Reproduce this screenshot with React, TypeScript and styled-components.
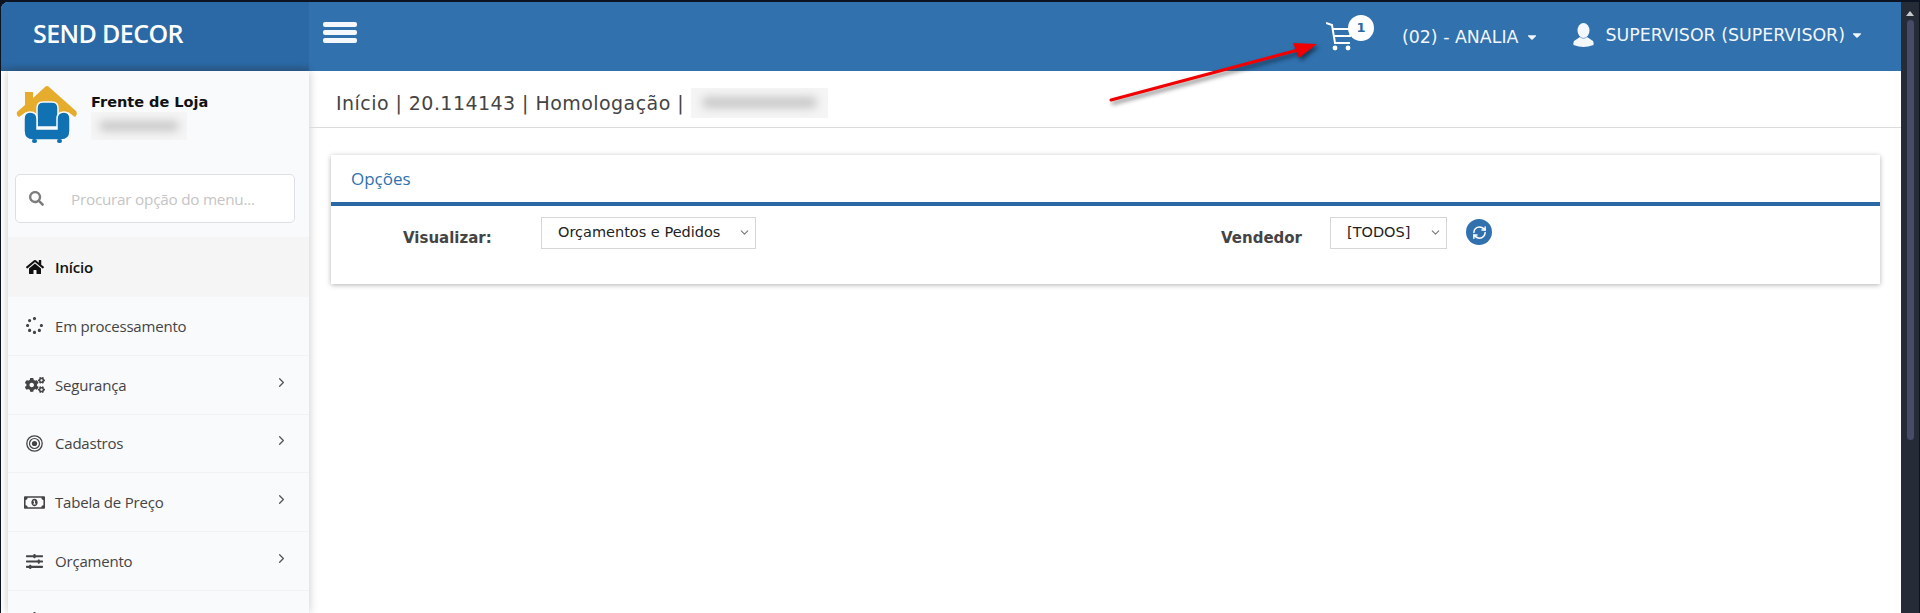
import React from "react";
import styled, { createGlobalStyle } from "styled-components";
import { FaHome, FaSpinner, FaCogs, FaSlidersH, FaSearch, FaRegMoneyBillAlt, FaCaretDown } from "react-icons/fa";
import { LuChevronRight, LuChevronDown, LuRefreshCw } from "react-icons/lu";

const GlobalStyle = createGlobalStyle`
  html, body { margin: 0; padding: 0; height: 100%; overflow: hidden; background: #0c1424; }
  * { box-sizing: border-box; }
`;

const Screen = styled.div`
  position: relative;
  display: flex;
  height: 613px;
  padding: 2px 0 0 1px;
  overflow: hidden;
  font-family: "Open Sans", sans-serif;
`;

const Frame = styled.div`
  flex: 1;
  display: flex;
  flex-direction: column;
  min-width: 0;
  background: #fff;
  border-top-left-radius: 8px;
  overflow: hidden;
`;

const TopBar = styled.header`
  display: flex;
  height: 69px;
  flex: none;
  background: #3071ae;
  color: #fff;
`;

const Brand = styled.div`
  width: 308px;
  flex: none;
  padding: 13px 0 0 32px;
  background: linear-gradient(#2a69a5 88%, #2c5f92);
  font-size: 25px;
  font-weight: 600;
  line-height: 36px;
  letter-spacing: -0.6px;
`;

const Nav = styled.nav`
  flex: 1;
  display: flex;
  align-items: flex-start;
  padding: 20px 37px 0 14px;
`;

const Burger = styled.div`
  display: flex;
  flex-direction: column;
  gap: 3px;
  width: 34px;
  span {
    height: 5px;
    border-radius: 2px;
    background: #f4f7fb;
  }
`;

const Cart = styled.div`
  position: relative;
  margin: -2px 49px 0 auto;
  width: 27px;
`;

const Badge = styled.span`
  position: absolute;
  left: 22px;
  top: -5px;
  width: 26px;
  height: 26px;
  border-radius: 50%;
  background: #fff;
  color: #2a69a5;
  font: 700 13px/26px "DejaVu Sans", sans-serif;
  text-align: center;
`;

const Menu = styled.div<{ $gap?: number; $up?: number }>`
  display: flex;
  align-items: center;
  height: 30px;
  margin-top: ${(p) => -(p.$up ?? 0)}px;
  margin-right: ${(p) => p.$gap ?? 0}px;
  font-family: "DejaVu Sans", sans-serif;
  font-size: 17.4px;
  color: #f2f6fa;
  white-space: nowrap;
  svg { flex: none; }
`;

const Caret = styled(FaCaretDown)<{ $ml: number }>`
  margin-left: ${(p) => p.$ml}px;
`;

const UserGlyph = styled.svg`
  margin-right: 11px;
`;

const Body = styled.div`
  flex: 1;
  display: flex;
  min-height: 0;
`;

const Sidebar = styled.aside`
  width: 301px;
  flex: none;
  margin-left: 7px;
  background: #f9fafc;
  box-shadow: 0 0 9px rgba(0, 0, 0, 0.22);
  overflow: hidden;
`;

const Profile = styled.div`
  display: flex;
  height: 103px;
  padding: 14px 0 0 8px;
`;

const ProfileText = styled.div`
  margin-left: 13px;
  padding-top: 8px;
  color: #111;
  font-family: "DejaVu Sans", sans-serif;
  font-size: 14.5px;
  font-weight: 700;
  line-height: 19px;
`;

const Blur = styled.div<{ $w: number; $h: number }>`
  width: ${(p) => p.$w}px;
  height: ${(p) => p.$h}px;
  background: #f5f5f6;
  overflow: hidden;
  display: flex;
  align-items: center;
  justify-content: center;
  &::after {
    content: "";
    width: 84%;
    height: 38%;
    border-radius: 5px;
    background: #c6c6c6;
    filter: blur(5px);
  }
`;

const Search = styled.label`
  display: flex;
  align-items: center;
  width: 280px;
  height: 49px;
  margin: 0 0 14px 7px;
  padding-left: 13px;
  border: 1px solid #dcdfe3;
  border-radius: 5px;
  background: #fff;
  color: #7d7d7d;
  input {
    flex: 1;
    min-width: 0;
    margin-left: 25px;
    border: none;
    outline: none;
    background: none;
    font: 15.3px "Open Sans", sans-serif;
    letter-spacing: -0.25px;
    &::placeholder { color: #c5c5c5; opacity: 1; }
  }
`;

const MenuRow = styled.div<{ $active?: boolean }>`
  display: flex;
  align-items: center;
  height: ${(p) => (p.$active ? 60 : 58.8)}px;
  padding: 0 20px 0 0;
  border-bottom: 1px solid ${(p) => (p.$active ? "transparent" : "#f1f2f4")};
  background: ${(p) => (p.$active ? "#f5f5f5" : "transparent")};
  color: ${(p) => (p.$active ? "#111" : "#444")};
  font-size: 15px;
  font-weight: ${(p) => (p.$active ? 600 : 500)};
  letter-spacing: -0.2px;
`;

const RowIcon = styled.span`
  width: 47px;
  flex: none;
  display: flex;
  justify-content: center;
  padding-left: 6px;
  color: #444;
`;

const RowArrow = styled.span`
  margin-left: auto;
  display: flex;
  margin-top: -5px;
  color: #555;
`;

const Main = styled.main`
  flex: 1;
  min-width: 0;
`;

const Crumbs = styled.div`
  display: flex;
  align-items: center;
  height: 57px;
  padding: 7px 0 0 27px;
  border-bottom: 1px solid #dcdcdc;
  color: #444;
  font-family: "DejaVu Sans", sans-serif;
  font-size: 19px;
  letter-spacing: 0.45px;
  white-space: pre;
`;

const Card = styled.section`
  margin: 27px 21px 0 22px;
  height: 129px;
  background: #fff;
  box-shadow: 0 1px 5px rgba(0, 0, 0, 0.3);
`;

const CardTitle = styled.h2`
  margin: 0;
  height: 51px;
  padding: 12px 0 0 20px;
  border-bottom: 4px solid #2a69a5;
  color: #3071ae;
  font-size: 17px;
  font-weight: 500;
  line-height: 24px;
`;

const Filters = styled.div`
  display: flex;
  align-items: flex-start;
  padding: 11px 0 0 72px;
`;

const FieldLabel = styled.label<{ $w: number; $ml?: number }>`
  width: ${(p) => p.$w}px;
  margin-left: ${(p) => p.$ml ?? 0}px;
  padding-top: 10px;
  color: #444;
  font-family: "DejaVu Sans", sans-serif;
  font-size: 15px;
  font-weight: 700;
  line-height: 22px;
`;

const SelectWrap = styled.div<{ $w: number }>`
  position: relative;
  width: ${(p) => p.$w}px;
  height: 32px;
  svg {
    position: absolute;
    right: 5px;
    top: 9px;
    color: #777;
    pointer-events: none;
  }
`;

const Select = styled.select`
  appearance: none;
  width: 100%;
  height: 100%;
  padding: 0 0 2px 16px;
  border: 1px solid #d6d6d6;
  border-radius: 0;
  background: #fff;
  color: #222;
  font-family: "DejaVu Sans", sans-serif;
  font-size: 14.5px;
  outline: none;
`;

const Refresh = styled.button`
  display: flex;
  align-items: center;
  justify-content: center;
  width: 26px;
  height: 26px;
  margin: 2px 0 0 19px;
  padding: 0;
  border: none;
  border-radius: 50%;
  background: #3071ae;
  color: #fff;
`;

const Scrollbar = styled.div`
  width: 18px;
  flex: none;
  display: flex;
  flex-direction: column;
  align-items: center;
  background: #262b38;
  span {
    margin-top: 9px;
    width: 0;
    height: 0;
    border: 4px solid transparent;
    border-top: none;
    border-bottom: 5px solid #c8cad2;
  }
  i {
    margin-top: 4px;
    width: 7px;
    height: 420px;
    border-radius: 4px;
    background: #474b67;
  }
`;

const BlackEdge = styled.div`
  width: 1px;
  flex: none;
`;

const Arrow = styled.svg`
  position: absolute;
  left: 1100px;
  top: 30px;
  filter: drop-shadow(2px 3px 2px rgba(0, 0, 0, 0.5));
`;

function Logo() {
  return (
    <svg width="62" height="60" viewBox="0 0 62 60">
      <path d="M1 27 L9 20 V7 H17 V13 L29 2 Q31 0 33 2 L60 26 Q62 29 59 32 L52 27 H10 L3 32 Q0 30 1 27Z" fill="#e5ac2d" />
      <path d="M10 27 L21 16 H41 L52 27 V32 H10Z" fill="#e5ac2d" />
      <path d="M21 23 Q21 17 27 17 H36 Q42 17 42 23 V42 H21Z" fill="#1072b3" stroke="#f9fafc" strokeWidth="1.5" />
      <path d="M8 34 Q8 27 14 27 Q21 27 21 34 V44 H41 V34 Q41 27 48 27 Q54 27 54 34 V46 Q54 55 45 55 H17 Q8 55 8 46Z" fill="#1072b3" stroke="#f9fafc" strokeWidth="1.5" />
      <rect x="16" y="54" width="5" height="4" rx="2" fill="#1072b3" />
      <rect x="41" y="54" width="5" height="4" rx="2" fill="#1072b3" />
    </svg>
  );
}

function CartGlyph() {
  return (
    <svg width="27" height="31" viewBox="0 0 27 31" fill="none" stroke="#fff" strokeWidth="2">
      <path d="M0 3 L6 5 L9 23 H24" />
      <path d="M6 9 H26 L24 16 H8" />
      <circle cx="9" cy="28" r="2.4" fill="#fff" stroke="none" />
      <circle cx="22" cy="28" r="2.4" fill="#fff" stroke="none" />
    </svg>
  );
}

function UserIcon() {
  return (
    <UserGlyph width="21" height="24" viewBox="0 0 21 24" fill="#f4f7fb">
      <ellipse cx="10.5" cy="7.5" rx="6" ry="7.5" />
      <path d="M7 14 Q10.5 17 14 14 L20 18 Q21 20 20.5 22 Q15 24 10.5 24 Q6 24 0.5 22 Q0 20 1 18Z" />
    </UserGlyph>
  );
}

function Target() {
  return (
    <svg width="17" height="17" viewBox="0 0 17 17" fill="none" stroke="#444">
      <circle cx="8.5" cy="8.5" r="7.7" strokeWidth="1.3" />
      <circle cx="8.5" cy="8.5" r="5" strokeWidth="1.2" />
      <circle cx="8.5" cy="8.5" r="2.6" fill="#444" stroke="none" />
    </svg>
  );
}

const rows = [
  { label: "Em processamento", icon: <FaSpinner size={17} /> },
  { label: "Segurança", icon: <FaCogs size={20} />, more: true },
  { label: "Cadastros", icon: <Target />, more: true },
  { label: "Tabela de Preço", icon: <FaRegMoneyBillAlt size={21} />, more: true },
  { label: "Orçamento", icon: <FaSlidersH size={17} />, more: true },
  { label: "", icon: <FaSlidersH size={17} />, more: true },
];

export default function App() {
  return (
    <Screen>
      <GlobalStyle />
      <Frame>
        <TopBar>
          <Brand>SEND DECOR</Brand>
          <Nav>
            <Burger>
              <span />
              <span />
              <span />
            </Burger>
            <Cart>
              <CartGlyph />
              <Badge>1</Badge>
            </Cart>
            <Menu $gap={34}>
              (02) - ANALIA
              <Caret size={14} $ml={7} />
            </Menu>
            <Menu $up={2}>
              <UserIcon />
              SUPERVISOR (SUPERVISOR)
              <Caret size={14} $ml={5} />
            </Menu>
          </Nav>
        </TopBar>
        <Body>
          <Sidebar>
            <Profile>
              <Logo />
              <ProfileText>
                Frente de Loja
                <Blur $w={96} $h={28} />
              </ProfileText>
            </Profile>
            <Search>
              <FaSearch size={15} />
              <input placeholder="Procurar opção do menu..." />
            </Search>
            <MenuRow $active>
              <RowIcon><FaHome size={18} color="#111" /></RowIcon>
              Início
            </MenuRow>
            {rows.map((r, i) => (
              <MenuRow key={i}>
                <RowIcon>{r.icon}</RowIcon>
                {r.label}
                {r.more && (
                  <RowArrow><LuChevronRight size={15} /></RowArrow>
                )}
              </MenuRow>
            ))}
          </Sidebar>
          <Main>
            <Crumbs>
              Início | 20.114143 | Homologação | <Blur $w={137} $h={30} />
            </Crumbs>
            <Card>
              <CardTitle>Opções</CardTitle>
              <Filters>
                <FieldLabel $w={138}>Visualizar:</FieldLabel>
                <SelectWrap $w={215}>
                  <Select defaultValue="op">
                    <option value="op">Orçamentos e Pedidos</option>
                  </Select>
                  <LuChevronDown size={13} />
                </SelectWrap>
                <FieldLabel $w={109} $ml={465}>Vendedor</FieldLabel>
                <SelectWrap $w={117}>
                  <Select defaultValue="all">
                    <option value="all">[TODOS]</option>
                  </Select>
                  <LuChevronDown size={13} />
                </SelectWrap>
                <Refresh><LuRefreshCw size={15} strokeWidth={2.4} /></Refresh>
              </Filters>
            </Card>
          </Main>
        </Body>
      </Frame>
      <Scrollbar>
        <span />
        <i />
      </Scrollbar>
      <BlackEdge />
      <Arrow width="230" height="90" viewBox="0 0 230 90">
        <path d="M11 70 L198 20" stroke="#f00000" strokeWidth="3" strokeLinecap="round" />
        <path d="M217 14 L193 13 L199 28Z" fill="#f00000" />
      </Arrow>
    </Screen>
  );
}
